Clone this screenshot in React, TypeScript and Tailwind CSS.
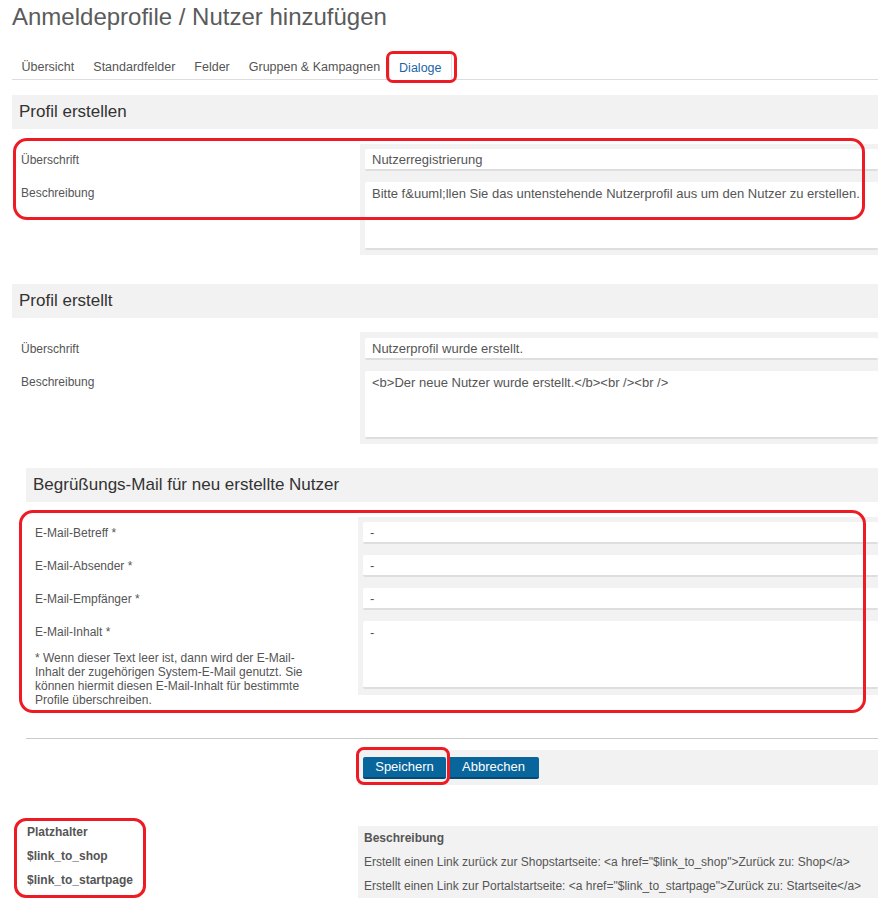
import React from "react";

const tabs = ["Übersicht", "Standardfelder", "Felder", "Gruppen & Kampagnen", "Dialoge"];

const Field: React.FC<{ value: string; tall?: boolean }> = ({ value, tall }) => (
  <div
    className={
      "bg-white rounded-[2px] border-b-2 border-[#dedede] px-[7px] text-[13px] text-[#555] whitespace-nowrap " +
      (tall ? "h-[68px] pt-[3px] leading-[18px]" : "h-[22px] leading-[21px]")
    }
  >
    {value}
  </div>
);

const Label: React.FC<{ children: React.ReactNode }> = ({ children }) => (
  <div className="h-[22px] flex items-center text-[12px] text-[#555]">{children}</div>
);

const SectionHead: React.FC<{ title: string; className?: string }> = ({ title, className }) => (
  <div className={"bg-[#f2f2f2] h-[34px] flex items-center pl-[7px] text-[17px] text-[#333] " + (className ?? "")}>
    {title}
  </div>
);

const Mark: React.FC<{ className: string }> = ({ className }) => (
  <div className={"absolute border-[3px] border-[#ed1c24] pointer-events-none " + className} />
);

export default function App() {
  return (
    <div
      className="relative w-[878px] h-[906px] overflow-hidden bg-white pl-[12px]"
      style={{ fontFamily: '"Liberation Sans", Arial, sans-serif' }}
    >
      <h1 className="pt-[3px] leading-[28px] text-[24px] text-[#5b5b5b] font-normal">
        Anmeldeprofile / Nutzer hinzufügen
      </h1>

      <ul className="mt-[21px] flex border-b border-[#dddddd]">
        {tabs.map((t) => {
          const active = t === "Dialoge";
          return (
            <li
              key={t}
              className={
                "flex items-center pt-[3px] px-[9.5px] text-[12.5px] whitespace-nowrap " +
                (active
                  ? "text-[#1d64a4] border-x border-t border-[#e4e4e4] bg-white -mb-px h-[28px] -ml-px"
                  : "text-[#555] h-[27px]")
              }
            >
              {t}
            </li>
          );
        })}
      </ul>

      {/* Profil erstellen */}
      <SectionHead title="Profil erstellen" className="mt-[15px] h-[33px]" />
      <div className="mt-[15px] flex">
        <div className="w-[348px] pl-[9px] pt-[5px]">
          <Label>Überschrift</Label>
          <div className="mt-[11px]">
            <Label>Beschreibung</Label>
          </div>
        </div>
        <div className="flex-1 bg-[#f2f2f2] pl-[5px] pt-[5px] pb-[5px] flex flex-col gap-[11px]">
          <Field value="Nutzerregistrierung" />
          <Field
            tall
            value={"Bitte f&uuml;llen Sie das untenstehende Nutzerprofil aus um den Nutzer zu erstellen."}
          />
        </div>
      </div>

      {/* Profil erstellt */}
      <SectionHead title="Profil erstellt" className="mt-[29px]" />
      <div className="mt-[14px] flex">
        <div className="w-[348px] pl-[9px] pt-[6px]">
          <Label>Überschrift</Label>
          <div className="mt-[11px]">
            <Label>Beschreibung</Label>
          </div>
        </div>
        <div className="flex-1 bg-[#f2f2f2] pl-[5px] pt-[6px] pb-[5px] flex flex-col gap-[11px]">
          <Field value="Nutzerprofil wurde erstellt." />
          <Field tall value={"<b>Der neue Nutzer wurde erstellt.</b><br /><br />"} />
        </div>
      </div>

      {/* Begrüßungs-Mail */}
      <div className="ml-[14px]">
        <SectionHead title="Begrüßungs-Mail für neu erstellte Nutzer" className="mt-[24px]" />
        <div className="mt-[15px] flex">
          <div className="w-[332px] pl-[9px] pt-[5px]">
            <Label>E-Mail-Betreff *</Label>
            <div className="mt-[11px]">
              <Label>E-Mail-Absender *</Label>
            </div>
            <div className="mt-[11px]">
              <Label>E-Mail-Empfänger *</Label>
            </div>
            <div className="mt-[11px]">
              <Label>E-Mail-Inhalt *</Label>
            </div>
            <p className="mt-[8px] text-[12px] leading-[14px] text-[#555]">
              * Wenn dieser Text leer ist, dann wird der E-Mail-
              <br />
              Inhalt der zugehörigen System-E-Mail genutzt. Sie
              <br />
              können hiermit diesen E-Mail-Inhalt für bestimmte
              <br />
              Profile überschreiben.
            </p>
          </div>
          <div className="flex-1 self-start bg-[#f2f2f2] pl-[5px] pt-[5px] pb-[6px] flex flex-col gap-[11px]">
            <Field value="-" />
            <Field value="-" />
            <Field value="-" />
            <Field tall value="-" />
          </div>
        </div>

        <div className="mt-[31px] border-t border-[#cccccc]" />

        <div className="mt-[11px] flex">
          <div className="w-[332px]" />
          <div className="flex-1 bg-[#f2f2f2] h-[35px] flex items-start gap-[2px] pl-[5px] pt-[7px]">
            <button className="w-[83px] h-[22px] rounded-[2px] bg-[#08669c] border-b-2 border-[#054a72] text-white text-[13px] leading-[20px]">
              Speichern
            </button>
            <button className="w-[91px] h-[22px] rounded-[2px] bg-[#08669c] border-b-2 border-[#054a72] text-white text-[13px] leading-[20px]">
              Abbrechen
            </button>
          </div>
        </div>
      </div>

      {/* Platzhalter */}
      <div className="mt-[35px] flex items-start">
        <div className="w-[346px] pl-[15px] text-[12px] font-bold text-[#555]">
          <div className="h-[24px] flex items-center">Platzhalter</div>
          <div className="h-[24px] flex items-center">$link_to_shop</div>
          <div className="h-[24px] flex items-center">$link_to_startpage</div>
        </div>
        <div className="flex-1 mt-[6px] bg-[#f2f2f2] pl-[6px] text-[12px] text-[#555]">
          <div className="h-[24px] flex items-center font-bold">Beschreibung</div>
          <div className="h-[24px] flex items-center whitespace-nowrap">
            Erstellt einen Link zurück zur Shopstartseite: &lt;a href="$link_to_shop"&gt;Zurück zu: Shop&lt;/a&gt;
          </div>
          <div className="h-[24px] flex items-center whitespace-nowrap">
            Erstellt einen Link zur Portalstartseite: &lt;a href="$link_to_startpage"&gt;Zurück zu: Startseite&lt;/a&gt;
          </div>
        </div>
      </div>

      {/* annotation marks */}
      <Mark className="left-[386px] top-[51px] w-[71px] h-[32px] rounded-[7px]" />
      <Mark className="left-[13px] top-[138px] w-[852px] h-[82px] rounded-[14px]" />
      <Mark className="left-[19px] top-[510px] w-[847px] h-[203px] rounded-[14px]" />
      <Mark className="left-[356px] top-[747px] w-[94px] h-[38px] rounded-[8px]" />
      <Mark className="left-[14px] top-[818px] w-[132px] h-[80px] rounded-[12px]" />
    </div>
  );
}
